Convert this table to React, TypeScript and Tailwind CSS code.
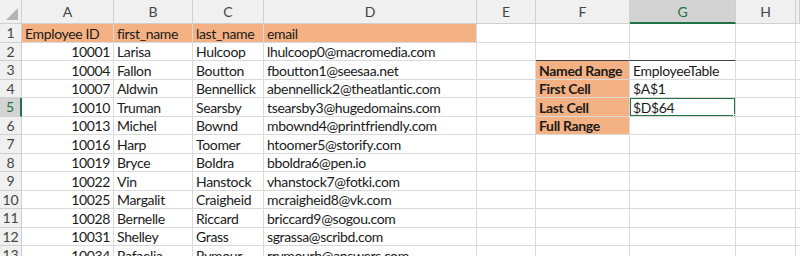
import React from "react";

const cols = ["A", "B", "C", "D", "E", "F", "G", "H", ""];

type Row = [string, string, string, string, string, string];

const rows: Row[] = [
  ["Employee ID", "first_name", "last_name", "email", "", ""],
  ["10001", "Larisa", "Hulcoop", "lhulcoop0@macromedia.com", "", ""],
  ["10004", "Fallon", "Boutton", "fboutton1@seesaa.net", "Named Range", "EmployeeTable"],
  ["10007", "Aldwin", "Bennellick", "abennellick2@theatlantic.com", "First Cell", "$A$1"],
  ["10010", "Truman", "Searsby", "tsearsby3@hugedomains.com", "Last Cell", "$D$64"],
  ["10013", "Michel", "Bownd", "mbownd4@printfriendly.com", "Full Range", ""],
  ["10016", "Harp", "Toomer", "htoomer5@storify.com", "", ""],
  ["10019", "Bryce", "Boldra", "bboldra6@pen.io", "", ""],
  ["10022", "Vin", "Hanstock", "vhanstock7@fotki.com", "", ""],
  ["10025", "Margalit", "Craigheid", "mcraigheid8@vk.com", "", ""],
  ["10028", "Bernelle", "Riccard", "briccard9@sogou.com", "", ""],
  ["10031", "Shelley", "Grass", "sgrassa@scribd.com", "", ""],
  ["10034", "Rafaelia", "Rymour", "rrymourb@answers.com", "", ""],
];

const grid = "grid grid-cols-[22px_92px_79px_71px_213px_59px_94px_106px_60px_1fr]";
const cell = "h-[18.5px] border-r border-b border-[#dadada] px-[3px] pt-[1px] flex items-center whitespace-nowrap overflow-hidden tracking-[-0.35px]";
const dark = "border-[#3f3f3f]";

function HeaderRow() {
  return (
    <div className={`${grid} h-6`}>
      <div className="bg-[#f0f0f0] border-r border-b border-[#cfcfcf] flex items-end justify-end p-[3px]">
        <svg width="12" height="12" viewBox="0 0 12 12">
          <polygon points="12,0 12,12 0,12" fill="#b4b4b4" />
        </svg>
      </div>
      {cols.map((c, i) => (
        <div
          key={i}
          className={
            c === "G"
              ? "bg-[#d3d3d3] border-r border-[#cfcfcf] border-b-2 border-b-[#217346] text-[#217346] flex items-center justify-center"
              : "bg-[#f0f0f0] border-r border-b border-[#cfcfcf] text-[#444] flex items-center justify-center"
          }
        >
          {c}
        </div>
      ))}
    </div>
  );
}

export default function App() {
  return (
    <div className="w-[800px] h-[256px] overflow-hidden bg-white text-[14px] text-[#1a1a1a] font-['Lato','Liberation_Sans',sans-serif]">
      <HeaderRow />
      {rows.map((r, i) => {
        const n = i + 1;
        const inBox = n >= 3 && n <= 6;
        const above = n === 2;
        const head = n === 1;
        return (
          <div key={n} className={grid}>
            <div
              className={
                n === 5
                  ? "h-[18.5px] bg-[#d3d3d3] border-b border-[#cfcfcf] border-r-2 border-r-[#217346] text-[#217346] flex items-center justify-center"
                  : "h-[18.5px] bg-[#f0f0f0] border-r border-b border-[#cfcfcf] text-[#444] flex items-center justify-center"
              }
            >
              {n}
            </div>
            <div className={`${cell} justify-end ${head ? "bg-[#f4b183] justify-start" : ""}`}>{r[0]}</div>
            <div className={`${cell} ${head ? "bg-[#f4b183]" : ""}`}>{r[1]}</div>
            <div className={`${cell} ${head ? "bg-[#f4b183]" : ""}`}>{r[2]}</div>
            <div className={`${cell} ${head ? "bg-[#f4b183]" : ""}`}>{r[3]}</div>
            <div className={`${cell} ${inBox ? dark : ""}`}></div>
            <div className={`${cell} ${inBox ? `bg-[#f4b183] font-bold ${dark}` : above ? "border-b-[#3f3f3f]" : ""}`}>{r[4]}</div>
            <div className={`${cell} relative ${inBox ? dark : above ? "border-b-[#3f3f3f]" : ""}`}>
              {r[5]}
              {n === 5 && (
                <div className="absolute -left-px -top-px -right-px -bottom-px border-2 border-[#217346]">
                  <div className="absolute -right-[4px] -bottom-[4px] w-[5px] h-[5px] bg-[#217346] border border-white" />
                </div>
              )}
            </div>
            <div className={cell}></div>
            <div className={cell}></div>
          </div>
        );
      })}
    </div>
  );
}
